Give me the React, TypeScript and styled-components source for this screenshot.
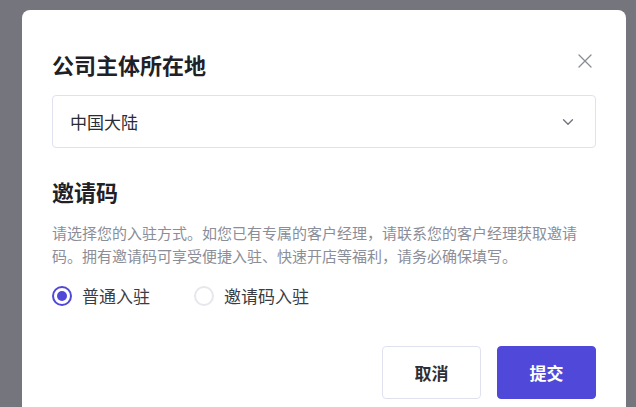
import React, { useState } from 'react';
import styled, { createGlobalStyle } from 'styled-components';

const GlobalStyle = createGlobalStyle`
  html, body {
    margin: 0;
    padding: 0;
    height: 100%;
    overflow: hidden;
    background: #75767d;
    font-family: "Noto Sans CJK SC", "Noto Sans", sans-serif;
  }
`;

const Overlay = styled.div`
  height: 100vh;
  padding: 10px 10px 0 22px;
  box-sizing: border-box;
  overflow: hidden;
`;

const Modal = styled.div`
  background: #ffffff;
  border-radius: 8px;
  padding: 39px 30px 40px;
  min-height: 460px;
  box-sizing: border-box;
`;

const Header = styled.div`
  display: flex;
  justify-content: space-between;
  align-items: flex-start;
`;

const Title = styled.h2`
  margin: 0;
  font-size: 22px;
  line-height: 30px;
  font-weight: 700;
  color: #1f2127;
`;

const CloseButton = styled.button`
  border: none;
  background: none;
  padding: 0;
  margin: 4px 3px 0 0;
  width: 16px;
  height: 16px;
  display: flex;
  cursor: pointer;
`;

const Select = styled.div`
  margin-top: 16px;
  height: 53px;
  box-sizing: border-box;
  border: 1px solid #dfe2ee;
  border-radius: 4px;
  display: flex;
  align-items: center;
  justify-content: space-between;
  padding: 0 21px 0 17px;
  font-size: 17px;
  color: #2a2c33;
`;

const SectionTitle = styled.h3`
  margin: 28px 0 0;
  font-size: 22px;
  line-height: 30px;
  font-weight: 700;
  color: #1f2127;
`;

const Description = styled.p`
  margin: 15px 0 0;
  max-width: 535px;
  font-size: 15px;
  line-height: 23px;
  color: #8b8e98;
`;

const RadioGroup = styled.div`
  margin-top: 17px;
  display: flex;
  gap: 44px;
`;

const RadioLabel = styled.label`
  display: flex;
  align-items: center;
  gap: 10px;
  font-size: 17px;
  line-height: 24px;
  color: #3a3c43;
  cursor: pointer;
`;

const RadioCircle = styled.span<{ $checked: boolean }>`
  width: 20px;
  height: 20px;
  box-sizing: border-box;
  border-radius: 50%;
  border: 2px solid ${(p) => (p.$checked ? '#4f48d8' : '#e6e7ec')};
  display: flex;
  align-items: center;
  justify-content: center;
  &::after {
    content: '';
    width: 10px;
    height: 10px;
    border-radius: 50%;
    background: #4f48d8;
    display: ${(p) => (p.$checked ? 'block' : 'none')};
  }
`;

const Footer = styled.div`
  margin-top: 38px;
  display: flex;
  justify-content: flex-end;
  gap: 16px;
`;

const Button = styled.button<{ $primary?: boolean }>`
  width: 99px;
  height: 53px;
  border-radius: 4px;
  font-family: inherit;
  font-size: 17px;
  font-weight: 700;
  cursor: pointer;
  border: 1px solid ${(p) => (p.$primary ? '#4f48d8' : '#dfe2ee')};
  background: ${(p) => (p.$primary ? '#4f48d8' : '#ffffff')};
  color: ${(p) => (p.$primary ? '#ffffff' : '#2e3036')};
`;

const options = ['普通入驻', '邀请码入驻'];

const App: React.FC = () => {
  const [mode, setMode] = useState(0);

  return (
    <>
      <GlobalStyle />
      <Overlay>
        <Modal>
          <Header>
            <Title>公司主体所在地</Title>
            <CloseButton aria-label="关闭">
              <svg width="16" height="16" viewBox="0 0 16 16" fill="none">
                <path d="M2 2L14 14M14 2L2 14" stroke="#8a8c94" strokeWidth="1.3" strokeLinecap="round" />
              </svg>
            </CloseButton>
          </Header>
          <Select>
            <span>中国大陆</span>
            <svg width="12" height="8" viewBox="0 0 12 8" fill="none">
              <path d="M1.5 1.8L6 6.2L10.5 1.8" stroke="#6f727b" strokeWidth="1.3" strokeLinecap="round" strokeLinejoin="round" />
            </svg>
          </Select>
          <SectionTitle>邀请码</SectionTitle>
          <Description>
            请选择您的入驻方式。如您已有专属的客户经理，请联系您的客户经理获取邀请码。拥有邀请码可享受便捷入驻、快速开店等福利，请务必确保填写。
          </Description>
          <RadioGroup>
            {options.map((label, i) => (
              <RadioLabel key={label} onClick={() => setMode(i)}>
                <RadioCircle $checked={mode === i} />
                {label}
              </RadioLabel>
            ))}
          </RadioGroup>
          <Footer>
            <Button>取消</Button>
            <Button $primary>提交</Button>
          </Footer>
        </Modal>
      </Overlay>
    </>
  );
};

export default App;
